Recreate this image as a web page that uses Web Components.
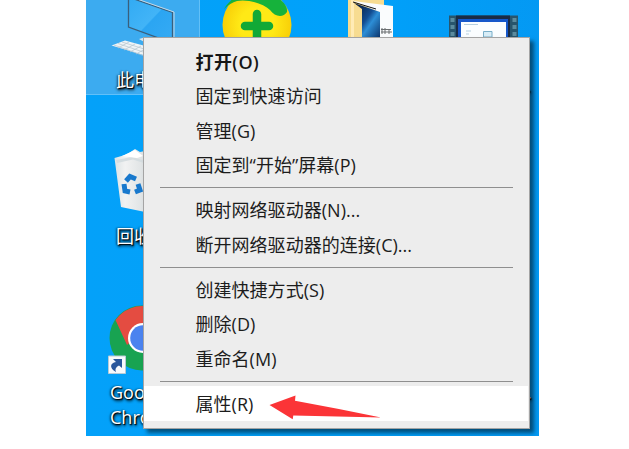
<!DOCTYPE html>
<html lang="zh-CN">
<head>
<meta charset="utf-8">
<title>桌面</title>
<style>
html,body{margin:0;height:100%;background:#fff;overflow:hidden}
body{font-family:"Open Sans","Noto Sans CJK SC",sans-serif}
</style>
</head>
<body>
<desk-top></desk-top>
<script>
const define = (name, html) => customElements.define(name, class extends HTMLElement {
  constructor() {
    super();
    const t = document.createElement('template');
    t.innerHTML = html;
    this.attachShadow({mode: 'open'}).append(t.content.cloneNode(true));
  }
});

define('desk-icon', `
<style>
:host{position:absolute;display:block}
svg,::slotted(svg){display:block}
</style><slot></slot>`);

define('icon-label', `
<style>
:host{position:absolute;display:block;color:#fff;font-size:18px;line-height:25px;white-space:nowrap;
text-shadow:1px 1px 1px #000,-1px 0 2px rgba(0,0,0,.6),1px 2px 3px #000}
</style><slot></slot>`);

define('menu-separator', `
<style>
:host{display:flex;align-items:center;height:10.5px;padding:0 16px 0 16px}
i{flex:1;height:1px;background:#8f8f8f}
</style><i></i>`);

define('menu-item', `
<style>
:host{display:flex;align-items:center;height:34.5px;padding-left:51.5px;margin:0 1px 0 0;font-size:18px;line-height:24px;color:#1c1c1c;white-space:nowrap;box-sizing:border-box}
:host([primary]){font-weight:600;color:#151515;letter-spacing:.4px}
:host([active]){background:#fff}
span{letter-spacing:.03px}
:host([primary]) span{letter-spacing:.4px}
</style><span><slot></slot></span>`);

define('context-menu', `
<style>
:host{display:flex;flex-direction:column;box-sizing:border-box;position:absolute;left:57px;top:37px;width:387px;height:392px;
padding-top:6.4px;background:#ededed;border:1px solid #a4a4a4;box-shadow:4px 4px 4px rgba(0,0,0,.5)}
</style><slot></slot>`);

define('pointer-arrow', `
<style>:host{position:absolute;left:183px;top:394px;display:block}svg{display:block}</style>
<svg width="114" height="28" viewBox="269 394 114 28"><path fill="#fb3437" d="M269.5 405 295.5 395.5 295 400.7Q338 408.500 381 417.5L293.3 415.6 292.7 419.3Z"/></svg>`);

define('desk-top', `
<style>
:host{display:block;position:relative;margin-left:86px;width:453px;height:436px;overflow:hidden;
background:linear-gradient(90deg,#04a1f9,#00a1fa 60%,#0499f3)}
.sel{position:absolute;left:0;top:0;width:114px;height:95px;box-sizing:border-box;background:#3cabf0;border:solid #62c0f8;border-width:0 1px 1px 0}
</style>
<div class="sel"></div>
<desk-icon style="left:24px;top:0">
<svg width="75" height="60" viewBox="110 0 75 60">
<defs><linearGradient id="scr" x1="0" y1="0" x2="1" y2="1"><stop offset="0" stop-color="#31aaf3"/><stop offset=".5" stop-color="#42b4f7"/><stop offset=".52" stop-color="#2ba5f2"/><stop offset="1" stop-color="#36abf4"/></linearGradient></defs>
<path fill="url(#scr)" stroke="#3a5f7c" stroke-width="1.3" d="M128.5-3 172.500 12.500V43L128.500 27Z"/>
<path fill="none" stroke="#c6d9e6" stroke-width="1" d="M130 -3.500 174 12V40"/>
<path fill="#eef3f6" d="M111.500 45.500 125 40.500 160 50V60Z"/>
<path stroke="#b3c4cf" stroke-width=".7" fill="none" d="M114 45 150 58M118 43.500 155 56M122 42 160 54M118 48 129 42M124 50 135 44M130 52 141 46M136 54 147 48"/>
<path fill="#d9e6ee" d="M139 39 146 37V43Z"/>
</svg></desk-icon>
<icon-label style="left:30px;top:68px">此电脑</icon-label>

<desk-icon style="left:135px;top:0">
<svg width="75" height="45" viewBox="221 0 75 45">
<defs><radialGradient id="y"><stop offset=".5" stop-color="#ffe916"/><stop offset="1" stop-color="#f8cf08"/></radialGradient></defs>
<circle cx="257" cy="25" r="34.500" fill="url(#y)"/>
<path d="M224 9C227 4 230 1 234 -2H278Q288 5 287 12C283 18 275 17 270 10C263 3 247-1 237 1Q230 3 224 9Z" fill="#16b23b"/>
<path d="M257 14V42M245 26H269" stroke="#12a936" stroke-width="8.500" stroke-linecap="round"/>
</svg></desk-icon>

<desk-icon style="left:261px;top:0">
<svg width="50" height="40" viewBox="347 0 50 40">
<defs><linearGradient id="b" x1="0" y1="0" x2="1" y2="1"><stop offset="0" stop-color="#07142d"/><stop offset=".45" stop-color="#124c91"/><stop offset=".6" stop-color="#2d8ed6"/><stop offset="1" stop-color="#092c62"/></linearGradient></defs>
<path fill="#f7dc91" d="M348 0H384V40H348Z"/><path fill="#ffebb6" d="M351 0H354V40H351Z"/>
<path fill="#fafcfd" d="M353 1 393 6V40H379V12Z"/><path fill="url(#b)" d="M354 3 380 12V40H362V9Z"/>
<path stroke="#151515" stroke-width="1" fill="none" d="M353 2 376 9"/>
<path stroke="#6b6f70" stroke-width="1" d="M381 29.500H391M381 32H392M382 28V34M385 28V34M389 29V34"/>
</svg></desk-icon>

<desk-icon style="left:363px;top:15px">
<svg width="70" height="30" viewBox="449 15 70 30">
<path fill="#28556c" d="M449 15.500H518V45H449Z"/><path fill="#192b46" d="M456 15.500H510V45H456Z"/>
<path fill="#1557ca" d="M458 19H508V45H458Z"/><path fill="#fafdff" d="M461 22H506V45H461Z"/>
<path stroke="#5b8b9e" stroke-width="4" stroke-dasharray="4 3" d="M452.500 18V44M514.500 18V44"/>
<path stroke="#b5cfe0" d="M464 24.500H478M466 31H471M466 34H469"/><path fill="#d8edf7" stroke="#78aec9" d="M483.500 31.500H492V37H483.500Z"/>
</svg></desk-icon>

<desk-icon style="left:27px;top:147px">
<svg width="45" height="70" viewBox="113 147 45 70">
<defs><linearGradient id="bin"><stop offset="0" stop-color="#dce3e5"/><stop offset=".3" stop-color="#f1f2f2"/><stop offset="1" stop-color="#d8dddf"/></linearGradient></defs>
<path fill="url(#bin)" d="M114.500 158 125 155 129 153 135 149 140 152 150 150V213L121 207Z"/>
<path fill="#d5dde0" d="M116 160 132 157 150 162V165L133 159.500 117 163Z"/>
<path fill="#fff" d="M122 156 135 150 143 156 137 158Z"/>
<g fill="none" stroke="#1879cd" stroke-width="5"><path d="M126 181 130 176.500 136 179"/><path d="M124 184 125 191 130 192"/><path d="M135 192 140 190 138 184"/></g>
</svg></desk-icon>
<icon-label style="left:30px;top:224px">回收站</icon-label>

<desk-icon style="left:22px;top:305px">
<svg width="70" height="72" viewBox="108 305 70 72">
<circle cx="142" cy="338" r="32.500" fill="#18a351"/><path fill="#e44c41" d="M115.500 320A32.500 32.500 0 0 1 174 332H142L127 345Z"/>
<circle cx="143" cy="338" r="15" fill="#fff"/><circle cx="143" cy="338" r="12.800" fill="#4b83ef"/>
<path fill="#f7fafc" stroke="#b8cbd6" d="M108.500 356H125.500V373.500H108.500Z"/>
<path fill="#29579b" d="M113 359H122V368L119 365.500Q114 368 116 372C109 368 110 363 116 362Z"/>
</svg></desk-icon>
<icon-label style="left:24px;top:380px">Google<br>Chrome</icon-label>
<icon-label style="left:440px;top:73px">.</icon-label>
<icon-label style="left:441px;top:380px">.</icon-label>

<context-menu>
<menu-item primary>打开(O)</menu-item>
<menu-item>固定到快速访问</menu-item>
<menu-item>管理(G)</menu-item>
<menu-item>固定到“开始”屏幕(P)</menu-item>
<menu-separator></menu-separator>
<menu-item>映射网络驱动器(N)...</menu-item>
<menu-item>断开网络驱动器的连接(C)...</menu-item>
<menu-separator></menu-separator>
<menu-item>创建快捷方式(S)</menu-item>
<menu-item>删除(D)</menu-item>
<menu-item>重命名(M)</menu-item>
<menu-separator></menu-separator>
<menu-item active>属性(R)</menu-item>
</context-menu>
<pointer-arrow></pointer-arrow>`);
</script>
</body>
</html>
